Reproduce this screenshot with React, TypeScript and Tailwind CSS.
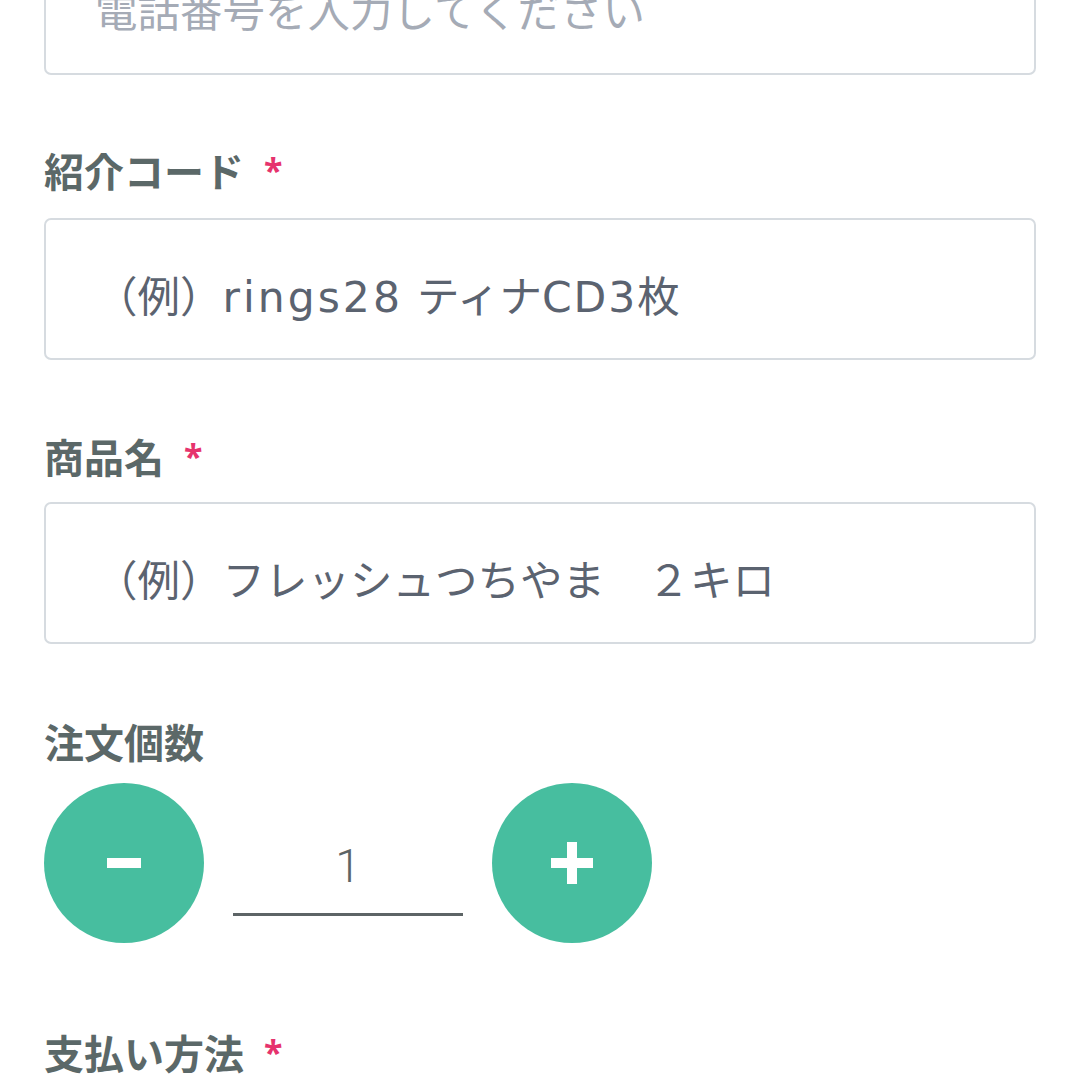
import React from "react";

const labelCls =
  "flex items-center h-[48px] text-[40px] leading-[48px] font-bold text-[#5b6868] [font-family:'Noto_Sans_CJK_JP','Noto_Sans',sans-serif]";

function Req() {
  return (
    <span className="ml-[20px] text-[34px] font-bold text-[#e6336d] [font-family:'Noto_Sans','Noto_Sans_CJK_JP',sans-serif]">
      *
    </span>
  );
}

function Field({ children, light }: { children: React.ReactNode; light?: boolean }) {
  return (
    <div className="h-[142px] w-full rounded-[7px] border-2 border-[#d6dbe0] bg-white flex items-center pl-[49px] pt-[17px]">
      <span
        className={
          "text-[42.5px] leading-[50px] whitespace-pre [font-family:'DejaVu_Sans','Noto_Sans_CJK_JP',sans-serif] " +
          (light ? "text-[#a5abb6]" : "text-[#5b6370]")
        }
      >
        {children}
      </span>
    </div>
  );
}

function Circle({ children }: { children: React.ReactNode }) {
  return (
    <div className="w-[160px] h-[160px] rounded-full bg-[#47be9f] flex items-center justify-center shrink-0">
      {children}
    </div>
  );
}

export default function App() {
  return (
    <div className="w-[1080px] h-[1080px] overflow-hidden bg-white px-[44px] box-border">
      <div className="mt-[-67px]">
        <Field light>電話番号を入力してください</Field>
      </div>

      <div className={labelCls + " mt-[71px]"}>
        紹介コード
        <Req />
      </div>
      <div className="mt-[24px]">
        <Field>
          （例）<span className="tracking-[3px]">rings28</span>
          <span className="inline-block w-[14px]"> </span>ティナ
          <span className="tracking-[2px]">CD3</span>枚
        </Field>
      </div>

      <div className={labelCls + " mt-[72px]"}>
        商品名
        <Req />
      </div>
      <div className="mt-[22px]">
        <Field>（例）フレッシュつちやま　２キロ</Field>
      </div>

      <div className={labelCls + " mt-[73px]"}>注文個数</div>

      <div className="mt-[18px] flex items-start gap-[29px]">
        <Circle>
          <div className="w-[34px] h-[10px] bg-white" />
        </Circle>
        <div className="w-[230px] h-[133px] border-b-[3px] border-[#5d6466] flex items-end justify-center pb-[22px]">
          <span className="text-[46px] leading-[50px] font-light text-[#5d6466] [font-family:'Roboto',sans-serif]">
            1
          </span>
        </div>
        <Circle>
          <div className="relative w-[42px] h-[42px]">
            <div className="absolute left-0 top-[16px] w-[42px] h-[10px] bg-white" />
            <div className="absolute top-0 left-[16px] w-[10px] h-[42px] bg-white" />
          </div>
        </Circle>
      </div>

      <div className={labelCls + " mt-[85px]"}>
        支払い方法
        <Req />
      </div>
    </div>
  );
}
